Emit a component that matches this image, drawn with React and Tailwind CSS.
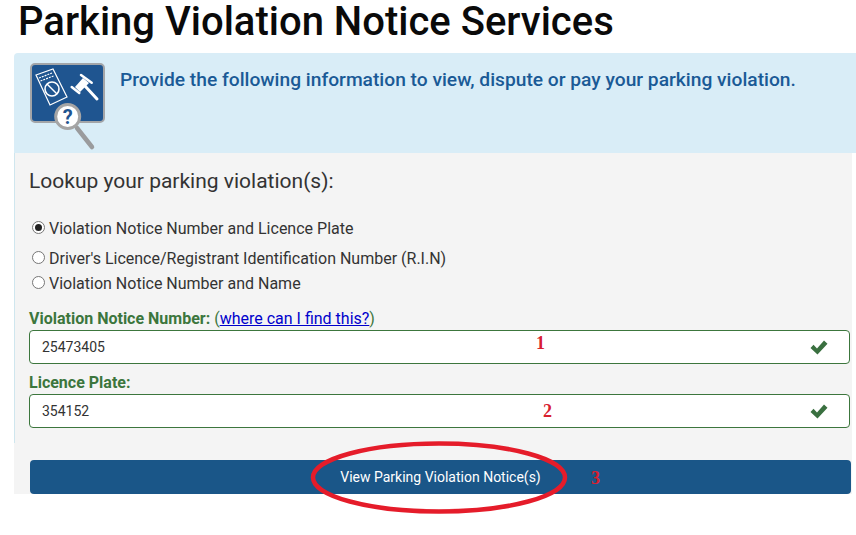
import React from "react";

function LogoIcon() {
  return (
    <svg width="78" height="92" viewBox="0 0 78 92" className="absolute left-[16px] top-[10px]">
      <rect x="1" y="1" width="73" height="58" rx="4" fill="#1f5590" stroke="#a3a5a8" strokeWidth="2" />
      <path d="M6 12L23 6L37 34L20 42Z" fill="none" stroke="#fff" strokeWidth="1.2" />
      <path d="M9 15L22 10M10.500 18L23.500 13" fill="none" stroke="#fff" strokeWidth="1.2" strokeDasharray="2 1" />
      <circle cx="22" cy="26" r="7" fill="none" stroke="#fff" strokeWidth="1.6" />
      <path d="M17 21l10 10" stroke="#fff" strokeWidth="1.400" />
      <path d="M45 24L53 15L59 20L50 29Z" fill="#fff" />
      <path d="M41.700 24L49.300 30" stroke="#fff" strokeWidth="2.500" strokeLinecap="round" />
      <path d="M51 12L61.700 19.700" stroke="#fff" strokeWidth="2.500" strokeLinecap="round" />
      <path d="M55 23L67 36" stroke="#fff" strokeWidth="3" strokeLinecap="round" />
      <path d="M47 65L62 84" stroke="#9a9b9d" strokeWidth="4.500" strokeLinecap="round" />
      <circle cx="37.700" cy="53.500" r="12" fill="#fff" stroke="#a5a5a5" strokeWidth="3" />
      <text x="37.700" y="60.500" textAnchor="middle" fontSize="20" fontWeight="700" fill="#1f5590" fontFamily="Roboto, sans-serif">?</text>
    </svg>
  );
}

function Radio({ checked }) {
  return (
    <span className="w-[13px] h-[13px] rounded-full border border-[#767676] bg-white flex items-center justify-center shrink-0 -translate-y-[2px]">
      {checked && <span className="w-[7px] h-[7px] rounded-full bg-[#222]" />}
    </span>
  );
}

function Check() {
  return (
    <svg width="18" height="15" viewBox="0 0 18 14" preserveAspectRatio="none">
      <path d="M0.500 7.500L3.500 4.500L7 8L14 0.500L17.500 3.500L7.500 13.500Z" fill="#3a7040" />
    </svg>
  );
}

function Field({ value, mark, markClass }) {
  return (
    <div className="relative h-[34px] rounded-[4px] border border-[#3c763d] bg-white flex items-center justify-between pl-[12px] pr-[21px] text-[14px] text-[#333]">
      <span>{value}</span>
      <span className={`absolute font-['Liberation_Serif',serif] font-bold text-[18px] text-[#d8202f] ${markClass}`}>{mark}</span>
      <Check />
    </div>
  );
}

export default function App() {
  return (
    <div className="relative w-[856px] h-[535px] bg-white overflow-hidden font-['Roboto',sans-serif]">
      <h1 className="h-[53px] pl-[18px] text-[40px] leading-[44px] font-medium text-[#0a0a0a]">
        Parking Violation Notice Services
      </h1>
      <div className="relative ml-[14px] h-[100px] bg-[#d9edf7] rounded-tl-[4px] pl-[106px] pt-[14px]">
        <LogoIcon />
        <p className="text-[19.22px] leading-[26px] font-medium text-[#1a5a96]">
          Provide the following information to view, dispute or pay your parking violation.
        </p>
      </div>
      <div className="relative ml-[14px] w-[838px] h-[341px] bg-[#f4f4f4] pl-[15px] pt-[15px] text-[#333]">
        <div className="absolute left-0 top-0 w-px h-[290px] bg-[#cfe6ee]" />
        <h2 className="text-[21px] leading-[26px] font-normal text-[#333]">Lookup your parking violation(s):</h2>
        <div className="mt-[25px] text-[16px] leading-[20px]">
          <label className="flex items-center gap-[4px] pl-[3px] h-[20px]">
            <Radio checked />
            <span>Violation Notice Number and Licence Plate</span>
          </label>
          <label className="flex items-center gap-[4px] pl-[3px] h-[20px] mt-[10px]">
            <Radio />
            <span>Driver's Licence/Registrant Identification Number (R.I.N)</span>
          </label>
          <label className="flex items-center gap-[4px] pl-[3px] h-[20px] mt-[5px]">
            <Radio />
            <span>Violation Notice Number and Name</span>
          </label>
        </div>
        <div className="mt-[15px] text-[16px] leading-[20px] h-[20px]">
          <span className="font-bold text-[#3c763d]">Violation Notice Number:</span>{" "}
          <span className="text-[#3c763d]">(</span>
          <a className="underline text-[#0000cc]">where can I find this?</a>
          <span className="text-[#3c763d]">)</span>
        </div>
        <div className="mt-[1px] w-[821px]">
          <Field value="25473405" mark="1" markClass="left-[506px] top-[-1px]" />
        </div>
        <div className="mt-[9px] text-[16px] leading-[20px] h-[20px] font-bold text-[#3c763d]">Licence Plate:</div>
        <div className="mt-[1px] w-[821px]">
          <Field value="354152" mark="2" markClass="left-[513px] top-[3px]" />
        </div>
        <button className="relative mt-[32px] ml-[1px] block w-[821px] h-[34px] rounded-[4px] bg-[#1a5688] text-white text-[14px]">
          View Parking Violation Notice(s)
        </button>
      </div>
      <svg width="260" height="76" viewBox="0 0 260 76" className="absolute left-[310px] top-[440px]">
        <ellipse cx="129" cy="37.500" rx="126" ry="34" fill="none" stroke="#e51c2a" strokeWidth="4.500" />
      </svg>
      <span className="absolute left-[591px] top-[467px] font-['Liberation_Serif',serif] font-bold text-[18px] leading-[22px] text-[#d8202f]">3</span>
    </div>
  );
}
